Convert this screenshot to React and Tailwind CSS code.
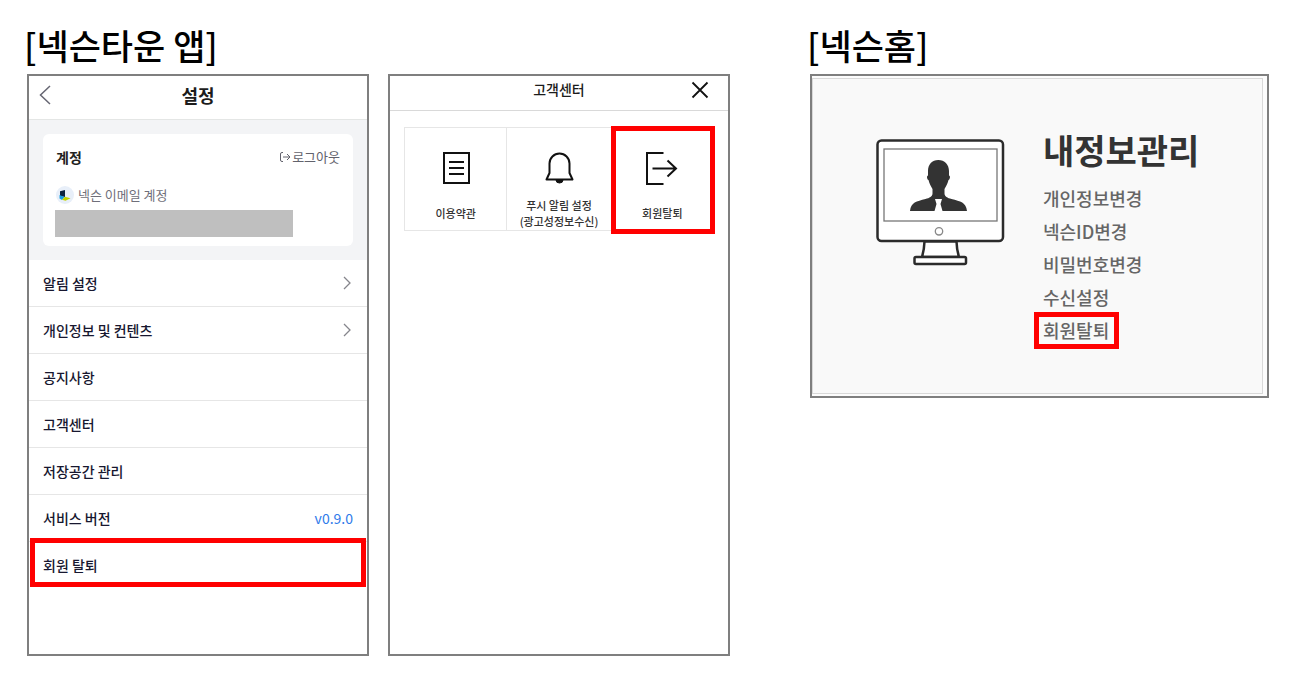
const settings = [
  { label: '알림 설정', arrow: true },
  { label: '개인정보 및 컨텐츠', arrow: true },
  { label: '공지사항' },
  { label: '고객센터' },
  { label: '저장공간 관리' },
  { label: '서비스 버전', version: 'v0.9.0' },
  { label: '회원 탈퇴', marked: true },
];

const myInfo = [
  { label: '개인정보변경' },
  { label: '넥슨ID변경' },
  { label: '비밀번호변경' },
  { label: '수신설정' },
  { label: '회원탈퇴', marked: true },
];

function BackIcon() {
  return (
    <svg viewBox="0 0 12 20" className="w-3 h-5" fill="none" stroke="currentColor" strokeWidth="1.500">
      <path d="M11 1L1.500 10l9.500 9" />
    </svg>
  );
}

function ArrowIcon() {
  return (
    <svg viewBox="0 0 8 14" className="w-2 h-3.5" fill="none" stroke="currentColor" strokeWidth="1.300">
      <path d="M1 1l6 6-6 6" />
    </svg>
  );
}

function LogoutIcon() {
  return (
    <svg viewBox="0 0 12 12" className="w-3 h-3" fill="none" stroke="currentColor" strokeWidth="1">
      <path d="M4 1.500H3A1.500 1.500 0 0 0 1.500 3v6A1.500 1.500 0 0 0 3 10.500h1M4 6h7M8 3l3 3-3 3" />
    </svg>
  );
}

function NexonIcon() {
  return (
    <svg viewBox="0 0 18 18" className="w-[18px] h-[18px]">
      <circle cx="9" cy="9" r="9" fill="#e8eff9" />
      <path d="M4 5.200L9 4v7l-5-1z" fill="#0b2340" />
      <path d="M3.500 9l5 2-2.500 3-2.500-1.500z" fill="#1a9fe0" />
      <path d="M9 10.800l5.500 1.500L9.500 14.800 6 13.800z" fill="#c3d500" />
    </svg>
  );
}

function TermsIcon() {
  return (
    <svg viewBox="0 0 36 36" className="w-9 h-9" fill="none" stroke="#111" strokeWidth="2">
      <rect x="6" y="3" width="25" height="30" />
      <path d="M11 12h15M11 18h15M11 24h15" />
    </svg>
  );
}

function BellIcon() {
  return (
    <svg viewBox="0 0 36 36" className="w-9 h-9" fill="none" stroke="#111" strokeWidth="2" strokeLinejoin="round">
      <path d="M8.500 13.500a10 10 0 0 1 20 0V23l3 6.500h-26l3-6.500z" />
      <path d="M15 30a3.500 3 0 0 0 7 0z" fill="#111" strokeWidth="1" />
    </svg>
  );
}

function LeaveIcon() {
  return (
    <svg viewBox="0 0 36 36" className="w-9 h-9" fill="none" stroke="#111" strokeWidth="2">
      <path d="M19.500 3H3v31h16.500M8.500 18.500H32M23.500 10.500l8.500 8-8.500 8" />
    </svg>
  );
}

function MonitorIcon() {
  return (
    <svg viewBox="0 0 132 130" className="w-[132px] h-[130px] shrink-0" fill="none" stroke="#2b2b2b" strokeWidth="2.500">
      <rect x="2.500" y="2.500" width="125.500" height="100.500" rx="4" fill="#fff" />
      <rect x="9" y="11" width="113" height="72" stroke="#777" strokeWidth="1.300" />
      <circle cx="64" cy="93.300" r="3.700" stroke="#888" strokeWidth="1.300" />
      <path d="M49.500 103.500q-.3 8-2.500 15.500h37q-2.300-7.500-2.500-15.500z" fill="#fff" />
      <rect x="39.500" y="119" width="51.500" height="7" rx="1.500" fill="#fff" />
      <path
        d="M63.300 22C57 22 53 26.500 53 33v4.500c-1.500 0-1.200 4 .5 4.500 1 4 2.500 6.500 4 9v4.500c0 3-3 4.500-7 5.500-9 2.500-14.500 3-15.500 12h24.500l2-7-1.500-5h7l-1.500 5 2 7H92c-1-9-6.500-9.500-15.500-12-4-1-7-2.500-7-5.500V51c1.500-2.500 3-5 4-9 1.700-.5 2-4.500.5-4.500V33c0-6.500-4.400-11-10.700-11z"
        fill="#333"
        stroke="none"
      />
    </svg>
  );
}

function Title({ children }) {
  return (
    <h2 className="-ml-[3px] pb-1 text-[35px] leading-[50px] font-medium text-black whitespace-nowrap">{children}</h2>
  );
}

function SettingsPhone() {
  return (
    <section className="min-h-[582px] border-2 border-[#7f7f7f] bg-white">
      <header className="grid grid-cols-[40px_1fr_40px] items-center h-11 pb-1.5 border-b border-[#e4e6e5]">
        <button aria-label="뒤로" className="pl-2.5 text-[#666672]">
          <BackIcon />
        </button>
        <h3 className="text-center text-lg leading-6 font-bold text-[#1c1c1c]">설정</h3>
      </header>

      <div className="bg-[#f3f4f6] px-3.5 py-3.5">
        <div className="h-28 rounded-md bg-white px-3 pt-[11px]">
          <div className="flex items-center justify-between px-px">
            <h4 className="text-sm leading-6 font-bold text-[#222]">계정</h4>
            <button className="flex items-center gap-px text-[13px] leading-6 text-[#62626c]">
              <LogoutIcon />
              로그아웃
            </button>
          </div>
          <p className="mt-3.5 flex items-center gap-1 px-px text-[13px] leading-6 text-[#6f6f7a]">
            <NexonIcon />
            넥슨 이메일 계정
          </p>
          <div className="mt-[3px] h-[27px] w-5/6 bg-[#bfbfbf]" />
        </div>
      </div>

      <ul>
        {settings.map((item) => (
          <li key={item.label} className="relative">
            <a
              href="#"
              className={`flex items-center justify-between h-[47px] px-3.5 border-b text-sm font-medium text-[#17172f] ${
                item.marked ? 'border-transparent' : 'border-[#e6e6e6]'
              }`}
            >
              {item.label}
              {item.arrow && (
                <span className="pr-0.5 text-[#85858c]">
                  <ArrowIcon />
                </span>
              )}
              {item.version && <span className="font-normal text-[#2f7bea]">{item.version}</span>}
            </a>
            {item.marked && (
              <span className="pointer-events-none absolute inset-x-px -top-1 bottom-0.5 border-[5px] border-[#f00]" />
            )}
          </li>
        ))}
      </ul>
    </section>
  );
}

function SupportPhone() {
  const cell =
    'flex flex-col items-center h-[104px] pt-[22px] text-center text-[11px] leading-4 font-medium text-[#333]';

  return (
    <section className="min-h-[582px] border-2 border-[#7f7f7f] bg-white">
      <header className="grid grid-cols-[56px_1fr_56px] items-center h-[35px] border-b border-[#d9d9d9]">
        <h3 className="col-start-2 pb-2 text-center text-sm leading-6 font-medium text-[#1c1c1c]">고객센터</h3>
        <button aria-label="닫기" className="flex justify-center pb-1.5">
          <svg viewBox="0 0 18 18" className="w-[18px] h-[18px]" stroke="#111" strokeWidth="1.800">
            <path d="M1.500 1.500l15 15M16.500 1.500l-15 15" />
          </svg>
        </button>
      </header>

      <div className="mx-3.5 mt-4 grid grid-cols-3">
        <a href="#" className={`${cell} border border-[#e6e6e6]`}>
          <TermsIcon />
          <span className="flex h-8 items-center mt-[11px]">이용약관</span>
        </a>
        <a href="#" className={`${cell} border-y border-[#e6e6e6]`}>
          <BellIcon />
          <span className="mt-[11px] h-8 whitespace-nowrap">
            푸시 알림 설정
            <br />
            (광고성정보수신)
          </span>
        </a>
        <a href="#" className={`${cell} relative border border-[#e6e6e6]`}>
          <LeaveIcon />
          <span className="flex h-8 items-center mt-[11px]">회원탈퇴</span>
          <span className="pointer-events-none absolute -left-px -right-0.5 -top-0.5 -bottom-1 border-[5px] border-[#f00]" />
        </a>
      </div>
    </section>
  );
}

function HomePanel() {
  return (
    <section className="border-2 border-[#7f7f7f] bg-[#fcfcfc] pt-0.5 pr-1 pb-0.5">
      <div className="flex min-h-[316px] border border-[#d9d9d9] bg-[#f9f9f9] pl-[62px] pb-10 pt-[47px]">
        <div className="pt-3">
          <MonitorIcon />
        </div>
        <div className="ml-9">
          <h3 className="text-[34px] leading-[48px] font-bold whitespace-nowrap text-[#333]">내정보관리</h3>
          <ul className="mt-2">
            {myInfo.map((item) => (
              <li key={item.label}>
                <a href="#" className="relative inline-block align-top text-lg leading-[33px] font-medium text-[#666]">
                  {item.label}
                  {item.marked && (
                    <span className="pointer-events-none absolute -left-[9px] -right-2.5 -inset-y-0.5 border-[5px] border-[#f00]" />
                  )}
                </a>
              </li>
            ))}
          </ul>
        </div>
      </div>
    </section>
  );
}

export default function App() {
  return (
    <main className="min-h-screen bg-white pt-5 pl-[27px] pr-[22px] pb-8 font-['Noto_Sans_CJK_KR',sans-serif]">
      <div className="grid grid-cols-[703fr_459fr] gap-x-20 items-start">
        <div>
          <Title>[넥슨타운 앱]</Title>
          <div className="grid grid-cols-2 gap-x-[19px]">
            <SettingsPhone />
            <SupportPhone />
          </div>
        </div>
        <div>
          <Title>[넥슨홈]</Title>
          <HomePanel />
        </div>
      </div>
    </main>
  );
}
